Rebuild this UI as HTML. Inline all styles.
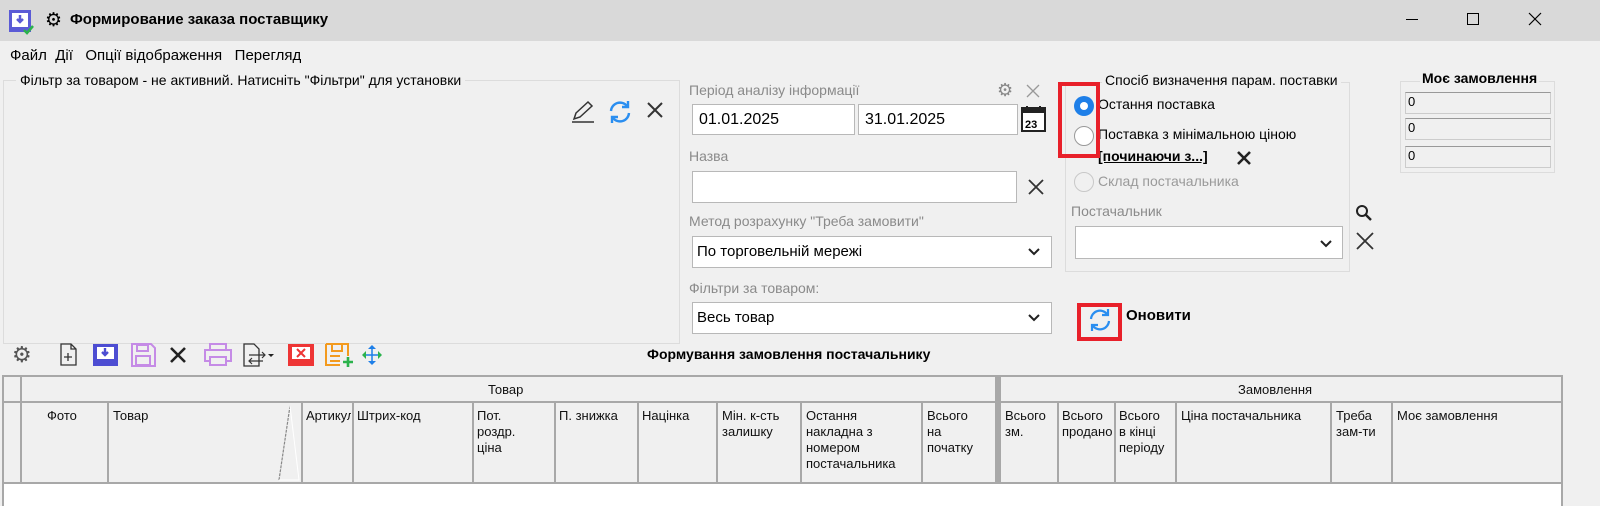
<!DOCTYPE html>
<html><head><meta charset="utf-8">
<style>
*{box-sizing:border-box;margin:0;padding:0}
body{width:1600px;height:506px;background:#f0f0f0;font-family:"Liberation Sans","DejaVu Sans",sans-serif;font-size:14px;color:#000;position:relative;overflow:hidden}
.a{position:absolute;white-space:nowrap}
.inp{position:absolute;background:#fff;border:1px solid #b8b8b8}
.lbl{position:absolute;color:#8a8a8a;font-size:14px;white-space:nowrap}
.gh{position:absolute;font-size:13px;line-height:16px;color:#111}
.vl{position:absolute;width:2px;background:#a8a8a8}
</style></head><body>
<div class="a" style="left:0;top:0;width:1600px;height:41px;background:#d9d9d9"></div>
<svg class="a" style="left:8px;top:9px" width="28" height="28" viewBox="0 0 28 28"><rect x="1" y="1" width="22" height="22" fill="#5b5bd6"/><rect x="4" y="4" width="16" height="14" fill="#fff"/><path d="M12 6v7M9 10l3 3 3-3" stroke="#5b5bd6" stroke-width="2.5" fill="none"/><path d="M16 21l3 3 6-7" stroke="#2bb24c" stroke-width="2.5" fill="none"/></svg>
<div class="a" style="left:45px;top:9px;font-size:19px">⚙</div>
<div class="a" style="left:70px;top:11px;font-size:15px;font-weight:bold">Формирование заказа поставщику</div>
<div class="a" style="left:1406px;top:19px;width:12px;height:1px;background:#000"></div>
<div class="a" style="left:1467px;top:13px;width:12px;height:12px;border:1px solid #000"></div>
<svg class="a" style="left:1528px;top:12px" width="14" height="14"><path d="M1 1L13 13M13 1L1 13" stroke="#000" stroke-width="1.2"/></svg>
<div class="a" style="left:10px;top:47px;font-size:15px">Файл&nbsp;&nbsp;Дії&nbsp;&nbsp;&nbsp;Опції відображення&nbsp;&nbsp;&nbsp;Перегляд</div>
<div class="a" style="left:3px;top:80px;width:677px;height:264px;border:1px solid #dcdcdc"></div>
<div class="a" style="left:16px;top:72px;padding:0 4px;background:#f0f0f0;font-size:14px">Фільтр за товаром - не активний. Натисніть "Фільтри" для установки</div>
<svg class="a" style="left:568px;top:100px" width="28" height="26"><path d="M4 22h22" stroke="#333" stroke-width="1.5"/><path d="M6 19l2-6 12-11 4 4-12 11z" stroke="#333" stroke-width="1.5" fill="none"/></svg>
<svg class="a" style="left:607px;top:99px" width="26" height="26" viewBox="0 0 26 26"><path d="M4 12a9 9 0 0 1 16-5M22 14a9 9 0 0 1-16 5" stroke="#2a8ef0" stroke-width="2.4" fill="none"/><path d="M21 2v6h-6M5 24v-6h6" stroke="#2a8ef0" stroke-width="2.4" fill="none"/></svg>
<svg class="a" style="left:646px;top:101px" width="18" height="18"><path d="M2 2L16 16M16 2L2 16" stroke="#333" stroke-width="2"/></svg>
<div class="lbl" style="left:689px;top:82px">Період аналізу інформації</div>
<div class="a" style="left:997px;top:80px;font-size:18px;color:#888">⚙</div>
<svg class="a" style="left:1026px;top:84px" width="14" height="14"><path d="M1 1L13 13M13 1L1 13" stroke="#999" stroke-width="1.3"/></svg>
<div class="inp" style="left:692px;top:104px;width:163px;height:31px"><span class="a" style="left:6px;top:6px;font-size:16px">01.01.2025</span></div>
<div class="inp" style="left:858px;top:104px;width:160px;height:31px"><span class="a" style="left:6px;top:6px;font-size:16px">31.01.2025</span></div>
<svg class="a" style="left:1021px;top:105px" width="26" height="28"><rect x="1" y="3" width="23" height="23" fill="#fff" stroke="#222" stroke-width="2"/><rect x="1" y="3" width="23" height="5" fill="#222"/><path d="M6 1v5M19 1v5" stroke="#222" stroke-width="2"/><text x="4" y="23" font-size="11" font-weight="bold" font-family="Liberation Sans">23</text></svg>
<div class="lbl" style="left:689px;top:148px">Назва</div>
<div class="inp" style="left:692px;top:171px;width:325px;height:32px"></div>
<svg class="a" style="left:1028px;top:179px" width="16" height="16"><path d="M1 1L15 15M15 1L1 15" stroke="#333" stroke-width="1.8"/></svg>
<div class="lbl" style="left:689px;top:213px">Метод розрахунку "Треба замовити"</div>
<div class="inp" style="left:692px;top:236px;width:360px;height:32px"><span class="a" style="left:4px;top:6px;font-size:15px">По торговельній мережі</span><svg class="a" style="left:334px;top:10px" width="14" height="10"><path d="M2 2l5 5 5-5" stroke="#222" stroke-width="2" fill="none"/></svg></div>
<div class="lbl" style="left:689px;top:280px">Фільтри за товаром:</div>
<div class="inp" style="left:692px;top:302px;width:360px;height:32px"><span class="a" style="left:4px;top:6px;font-size:15px">Весь товар</span><svg class="a" style="left:334px;top:10px" width="14" height="10"><path d="M2 2l5 5 5-5" stroke="#222" stroke-width="2" fill="none"/></svg></div>
<div class="a" style="left:1065px;top:82px;width:285px;height:190px;border:1px solid #dcdcdc"></div>
<div class="a" style="left:1102px;top:72px;padding:0 3px;background:#f0f0f0;font-size:14px">Спосіб визначення парам. поставки</div>
<div class="a" style="left:1074px;top:96px;width:20px;height:20px;border-radius:50%;background:#1e7fe8"></div>
<div class="a" style="left:1080px;top:102px;width:8px;height:8px;border-radius:50%;background:#fff"></div>
<div class="a" style="left:1098px;top:96px;font-size:14px">Остання поставка</div>
<div class="a" style="left:1074px;top:126px;width:20px;height:20px;border-radius:50%;background:#fff;border:1px solid #999"></div>
<div class="a" style="left:1098px;top:126px;font-size:14px">Поставка з мінімальною ціною</div>
<div class="a" style="left:1098px;top:148px;font-size:14px;font-weight:bold;text-decoration:underline">[починаючи з...]</div>
<svg class="a" style="left:1236px;top:150px" width="16" height="16"><path d="M2 2L14 14M14 2L2 14" stroke="#222" stroke-width="2.6"/></svg>
<div class="a" style="left:1074px;top:172px;width:20px;height:20px;border-radius:50%;border:1px solid #c8c8c8"></div>
<div class="a" style="left:1098px;top:173px;font-size:14px;color:#9a9a9a">Склад постачальника</div>
<div class="lbl" style="left:1071px;top:203px">Постачальник</div>
<svg class="a" style="left:1355px;top:204px" width="18" height="18"><circle cx="7" cy="7" r="5" stroke="#222" stroke-width="2" fill="none"/><path d="M11 11l5 5" stroke="#222" stroke-width="2.4"/></svg>
<div class="inp" style="left:1075px;top:226px;width:268px;height:33px"><svg class="a" style="left:243px;top:12px" width="14" height="10"><path d="M2 2l5 5 5-5" stroke="#222" stroke-width="2" fill="none"/></svg></div>
<svg class="a" style="left:1356px;top:232px" width="18" height="18"><path d="M1 1L17 17M17 1L1 17" stroke="#333" stroke-width="1.8"/></svg>
<div class="a" style="left:1058px;top:82px;width:42px;height:76px;border:4px solid #e8202a"></div>
<div class="a" style="left:1077px;top:303px;width:45px;height:38px;border:4px solid #e8202a"></div>
<svg class="a" style="left:1087px;top:306px" width="26" height="28" viewBox="0 0 26 26"><path d="M4 12a9 9 0 0 1 16-5M22 14a9 9 0 0 1-16 5" stroke="#2a8ef0" stroke-width="2.2" fill="none"/><path d="M21 2v6h-6M5 24v-6h6" stroke="#2a8ef0" stroke-width="2.2" fill="none"/></svg>
<div class="a" style="left:1126px;top:307px;font-size:15px;font-weight:bold">Оновити</div>
<div class="a" style="left:1400px;top:81px;width:155px;height:92px;border:1px solid #dcdcdc"></div>
<div class="a" style="left:1420px;top:70px;padding:0 2px;background:#f0f0f0;font-size:14px;font-weight:bold">Моє замовлення</div>
<div class="a" style="left:1405px;top:92px;width:146px;height:22px;border:1px solid #ccc;border-top-color:#999;font-size:13px;padding:1px 2px">0</div>
<div class="a" style="left:1405px;top:118px;width:146px;height:22px;border:1px solid #ccc;border-top-color:#999;font-size:13px;padding:1px 2px">0</div>
<div class="a" style="left:1405px;top:146px;width:146px;height:22px;border:1px solid #ccc;border-top-color:#999;font-size:13px;padding:1px 2px">0</div>
<div class="a" style="left:12px;top:342px;font-size:22px;color:#555">⚙</div>
<svg class="a" style="left:58px;top:343px" width="22" height="24"><path d="M3 1h10l5 5v16H3z M13 1v5h5" stroke="#333" stroke-width="1.3" fill="none"/><path d="M10 10v8M6 14h8" stroke="#333" stroke-width="1.3"/></svg>
<svg class="a" style="left:92px;top:343px" width="28" height="24"><rect x="1" y="1" width="25" height="22" fill="#4d4dd2"/><rect x="5" y="4" width="17" height="12" fill="#fff"/><path d="M13 5v7M10 9l3 3 3-3" stroke="#4d4dd2" stroke-width="2.4" fill="none"/></svg>
<svg class="a" style="left:130px;top:343px" width="26" height="24"><path d="M2 1h19l4 4v18H2z" stroke="#c58be6" stroke-width="2" fill="none"/><rect x="7" y="2" width="11" height="6" stroke="#c58be6" stroke-width="2" fill="none"/><rect x="6" y="13" width="14" height="9" stroke="#c58be6" stroke-width="2" fill="none"/></svg>
<svg class="a" style="left:169px;top:346px" width="18" height="18"><path d="M2 2L16 16M16 2L2 16" stroke="#222" stroke-width="2.6"/></svg>
<svg class="a" style="left:203px;top:343px" width="30" height="24"><rect x="7" y="1" width="16" height="6" stroke="#c58be6" stroke-width="2" fill="none"/><rect x="2" y="7" width="26" height="11" stroke="#c58be6" stroke-width="2" fill="none"/><rect x="7" y="14" width="16" height="8" stroke="#c58be6" stroke-width="2" fill="#f0f0f0"/></svg>
<svg class="a" style="left:241px;top:343px" width="38" height="24"><path d="M3 1h10l5 5v17H3z" stroke="#333" stroke-width="1.3" fill="none"/><path d="M8 12h16M21 9l3 3-3 3M22 18H8M11 15l-3 3 3 3" stroke="#333" stroke-width="1.2" fill="none"/><path d="M27 11h6l-3 3z" fill="#222"/></svg>
<svg class="a" style="left:287px;top:343px" width="28" height="24"><rect x="1" y="1" width="26" height="22" fill="#ee3535"/><rect x="5" y="4" width="18" height="12" fill="#fff"/><path d="M10 6l8 8M18 6l-8 8" stroke="#ee3535" stroke-width="2"/></svg>
<svg class="a" style="left:324px;top:343px" width="30" height="26"><path d="M2 1h22v12M2 1v21h14" stroke="#f39a1e" stroke-width="2" fill="none"/><path d="M8 2v6h10V2M6 13h10M6 18h10" stroke="#f39a1e" stroke-width="2" fill="none"/><path d="M24 14v10M19 19h10" stroke="#2bb24c" stroke-width="2.6"/></svg>
<svg class="a" style="left:360px;top:343px" width="24" height="24"><path d="M12 2l4 4h-8zM12 22l4-4h-8z" fill="#1e7fe8"/><path d="M2 12l4-4v8zM22 12l-4-4v8z" fill="#2bb24c"/><path d="M12 6v12M6 12h12" stroke="#1e7fe8" stroke-width="1.5"/></svg>
<div class="a" style="left:647px;top:346px;font-size:14px;font-weight:bold">Формування замовлення постачальнику</div>
<div class="a" style="left:2px;top:375px;width:1561px;height:131px;border:2px solid #a8a8a8;border-bottom:none;background:#f0f0f0"></div>
<div class="a" style="left:4px;top:484px;width:1557px;height:22px;background:#fff"></div>
<div class="a" style="left:4px;top:401px;width:1557px;height:2px;background:#a8a8a8"></div>
<div class="a" style="left:4px;top:482px;width:1557px;height:2px;background:#a8a8a8"></div>
<div class="vl" style="left:20px;top:377px;height:106px"></div>
<div class="vl" style="left:995px;top:377px;width:6px;height:106px"></div>
<div class="gh" style="left:488px;top:382px">Товар</div>
<div class="gh" style="left:1238px;top:382px">Замовлення</div>
<div class="vl" style="left:107px;top:403px;height:80px"></div>
<div class="vl" style="left:301px;top:403px;height:80px"></div>
<div class="vl" style="left:352px;top:403px;height:80px"></div>
<div class="vl" style="left:472px;top:403px;height:80px"></div>
<div class="vl" style="left:554px;top:403px;height:80px"></div>
<div class="vl" style="left:637px;top:403px;height:80px"></div>
<div class="vl" style="left:716px;top:403px;height:80px"></div>
<div class="vl" style="left:800px;top:403px;height:80px"></div>
<div class="vl" style="left:921px;top:403px;height:80px"></div>
<div class="vl" style="left:1057px;top:403px;height:80px"></div>
<div class="vl" style="left:1114px;top:403px;height:80px"></div>
<div class="vl" style="left:1175px;top:403px;height:80px"></div>
<div class="vl" style="left:1330px;top:403px;height:80px"></div>
<div class="vl" style="left:1391px;top:403px;height:80px"></div>
<svg class="a" style="left:276px;top:404px" width="26" height="78"><path d="M14 2L3 76" stroke="#888" stroke-width="1.2" stroke-dasharray="3 1"/><path d="M14 2L23 76H3" stroke="#fff" stroke-width="1" fill="none"/></svg>
<div class="gh" style="left:47px;top:408px">Фото</div>
<div class="gh" style="left:113px;top:408px">Товар</div>
<div class="gh" style="left:306px;top:408px;width:45px;overflow:hidden">Артикул</div>
<div class="gh" style="left:357px;top:408px">Штрих-код</div>
<div class="gh" style="left:477px;top:408px">Пот.<br>роздр.<br>ціна</div>
<div class="gh" style="left:559px;top:408px">П. знижка</div>
<div class="gh" style="left:642px;top:408px">Націнка</div>
<div class="gh" style="left:722px;top:408px">Мін. к-сть<br>залишку</div>
<div class="gh" style="left:806px;top:408px">Остання<br>накладна з<br>номером<br>постачальника</div>
<div class="gh" style="left:927px;top:408px">Всього<br>на<br>початку</div>
<div class="gh" style="left:1005px;top:408px;width:51px;overflow:hidden">Всього<br>зм.</div>
<div class="gh" style="left:1062px;top:408px;width:51px;overflow:hidden">Всього<br>продано</div>
<div class="gh" style="left:1119px;top:408px">Всього<br>в кінці<br>періоду</div>
<div class="gh" style="left:1181px;top:408px">Ціна постачальника</div>
<div class="gh" style="left:1336px;top:408px">Треба<br>зам-ти</div>
<div class="gh" style="left:1397px;top:408px">Моє замовлення</div>
</body></html>
